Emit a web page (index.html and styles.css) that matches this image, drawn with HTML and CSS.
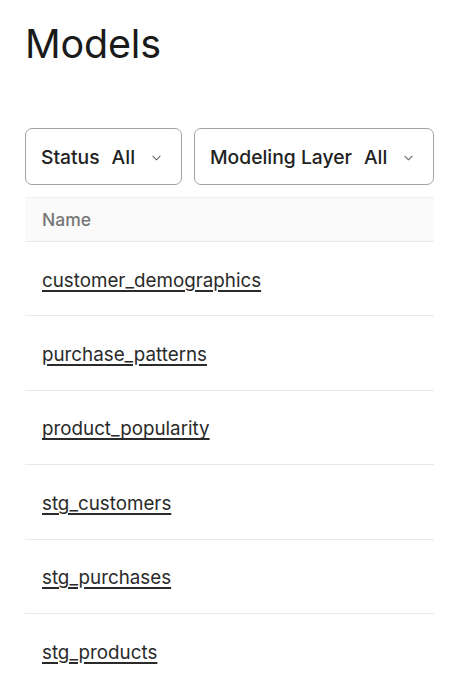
FILE: index.html
```html
<!DOCTYPE html>
<html>
<head>
<meta charset="utf-8">
<link rel="stylesheet" href="styles.css">
</head>
<body>
<main class="page">
  <h1 class="title">Models</h1>
  <div class="filters">
    <button class="filter"><span class="label">Status</span><span class="value">All</span><svg class="chev" viewBox="0 0 10 6" width="9" height="6"><path d="M1 1l4 4 4-4" fill="none" stroke="#666" stroke-width="1.2" stroke-linecap="round" stroke-linejoin="round"/></svg></button>
    <button class="filter"><span class="label">Modeling Layer</span><span class="value">All</span><svg class="chev" viewBox="0 0 10 6" width="9" height="6"><path d="M1 1l4 4 4-4" fill="none" stroke="#666" stroke-width="1.2" stroke-linecap="round" stroke-linejoin="round"/></svg></button>
  </div>
  <div class="table">
    <div class="thead">Name</div>
    <div class="row"><a href="#">customer_demographics</a></div>
    <div class="row"><a href="#">purchase_patterns</a></div>
    <div class="row"><a href="#">product_popularity</a></div>
    <div class="row"><a href="#">stg_customers</a></div>
    <div class="row"><a href="#">stg_purchases</a></div>
    <div class="row"><a href="#">stg_products</a></div>
  </div>
</main>
</body>
</html>
```
FILE: styles.css
```css
html, body {
  margin: 0;
  padding: 0;
  background: #fff;
}
body {
  font-family: Inter, "Noto Sans", sans-serif;
  color: #1c1c1c;
  overflow: hidden;
}
.page {
  width: 409px;
  padding: 19px 0 0 25px;
}
.title {
  margin: 0;
  font-size: 39.5px;
  font-weight: 400;
  line-height: 50px;
  letter-spacing: -0.2px;
  color: #1a1a1a;
}
.filters {
  display: flex;
  gap: 12px;
  margin-top: 59px;
}
.filter {
  display: flex;
  align-items: center;
  flex: none;
  height: 57px;
  padding: 0 20px 0 15px;
  border: 1px solid #a3a3a3;
  border-radius: 7px;
  background: #fff;
  font-family: inherit;
  font-size: 19.3px;
  font-weight: 500;
  color: #222;
  white-space: nowrap;
}
.filter:last-child { flex: 1 1 auto; }
.label { margin-right: 12px; }
.chev { margin-left: 17px; margin-top: 2px; }
.table {
  margin-top: 12px;
}
.thead {
  height: 43px;
  display: flex;
  align-items: center;
  padding-left: 17px;
  background: #fafafa;
  border-top: 1px solid #efefef;
  border-bottom: 1px solid #eaeaea;
  font-size: 17.5px;
  font-weight: 500;
  color: #777;
}
.row {
  box-sizing: border-box;
  height: 74.4px;
  display: flex;
  align-items: center;
  padding: 3px 0 0 17px;
  border-bottom: 1px solid #e8e8e8;
}
.row a {
  font-size: 18.8px;
  color: #2a2a2a;
  text-decoration: underline;
  text-underline-offset: 3px;
  text-decoration-thickness: 1.5px;
}
```
